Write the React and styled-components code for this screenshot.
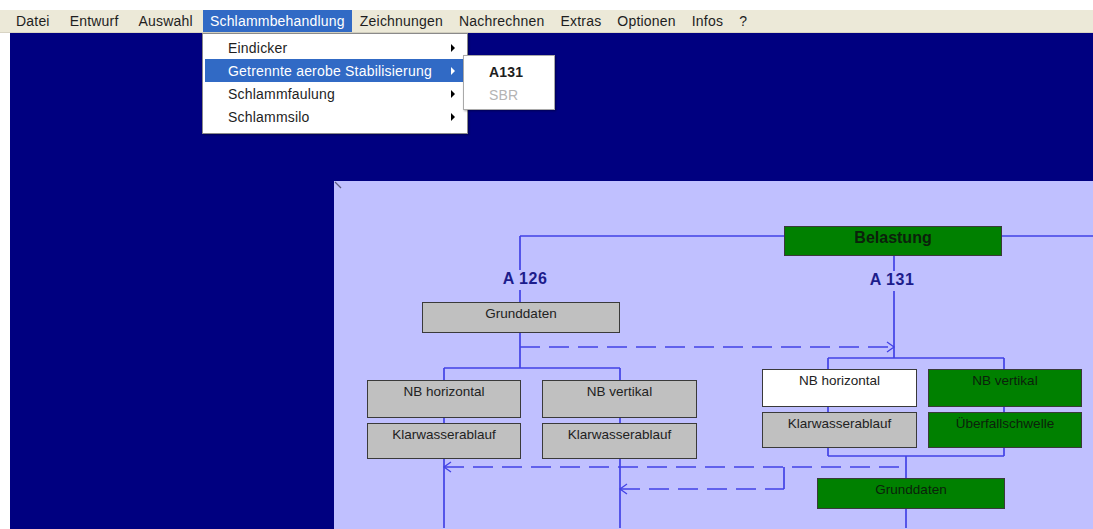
import React from "react";
import styled, { createGlobalStyle } from "styled-components";

const GlobalStyle = createGlobalStyle`
    html, body {
        margin: 0;
        padding: 0;
        background: #ffffff;
        overflow: hidden;
    }
    * {
        box-sizing: border-box;
    }
`;

const Screen = styled.div`
    position: relative;
    display: flex;
    flex-direction: column;
    width: 1093px;
    height: 529px;
    padding-top: 10px;
    font-family: "Liberation Sans", Arial, sans-serif;
    background: #ffffff;
`;

const MenuBar = styled.ul`
    display: flex;
    align-items: stretch;
    height: 23px;
    margin: 0;
    padding: 0 0 0 6px;
    list-style: none;
    background: #ece9d8;
    border-bottom: 1px solid #d8d4c4;
`;

const MenuItem = styled.li`
    display: flex;
    align-items: center;
    padding: 0 ${(p) => p.$pad}px;
    font-size: 14px;
    letter-spacing: 0.2px;
    color: ${(p) => (p.$active ? "#ffffff" : "#1e1e1e")};
    background: ${(p) => (p.$active ? "#316ac5" : "transparent")};
`;

const Workspace = styled.div`
    flex: 1;
    display: flex;
    margin-left: 10px;
    padding: 148px 0 0 324px;
    background: #000080;
`;

const Canvas = styled.div`
    position: relative;
    flex: 1;
    background: #c0c0ff;
    overflow: hidden;
`;

const Wires = styled.svg`
    position: absolute;
    left: 0;
    top: 0;
    width: 100%;
    height: 100%;
`;

const Node = styled.div`
    position: absolute;
    left: ${(p) => p.$x}px;
    top: ${(p) => p.$y}px;
    width: ${(p) => p.$w}px;
    height: ${(p) => p.$h}px;
    padding-top: 3px;
    border: 1.5px solid #3a3a3a;
    background: ${(p) =>
        p.$tone === "green" ? "#008000" : p.$tone === "white" ? "#ffffff" : "#c0c0c0"};
    color: ${(p) => (p.$tone === "green" ? "#0b220b" : "#222222")};
    font-size: ${(p) => (p.$bold ? 16 : 13.5)}px;
    font-weight: ${(p) => (p.$bold ? 700 : 400)};
    line-height: 16px;
    text-align: center;
    white-space: nowrap;
`;

const Label = styled.div`
    position: absolute;
    left: ${(p) => p.$x}px;
    top: ${(p) => p.$y}px;
    transform: translateX(-50%);
    font-size: 16px;
    font-weight: 700;
    letter-spacing: 0.5px;
    line-height: 20px;
    color: #1c1c8c;
    white-space: nowrap;
`;

const Dropdown = styled.div`
    position: absolute;
    left: 202px;
    top: 33px;
    width: 266px;
    padding: 2px 2px 5px;
    background: #ffffff;
    border: 1px solid #8a8a8a;
    box-shadow: 1px 1px 2px rgba(0, 0, 0, 0.35);
`;

const SubMenu = styled(Dropdown)`
    left: 463px;
    top: 55px;
    width: 92px;
    padding: 4px 2px 3px;
    border-color: #a9a9a9;
`;

const DropItem = styled.div`
    display: flex;
    align-items: center;
    justify-content: space-between;
    height: 23px;
    padding: 0 10px 0 23px;
    font-size: 14px;
    letter-spacing: 0.2px;
    font-weight: ${(p) => (p.$bold ? 700 : 400)};
    color: ${(p) => (p.$active ? "#ffffff" : p.$disabled ? "#b4b4b4" : "#1e1e1e")};
    background: ${(p) => (p.$active ? "#316ac5" : "transparent")};
`;

const Arrow = styled.span`
    width: 0;
    height: 0;
    border-top: 4px solid transparent;
    border-bottom: 4px solid transparent;
    border-left: 4px solid ${(p) => (p.$light ? "#ffffff" : "#000000")};
`;

const menu = [
    { label: "Datei", pad: 10 },
    { label: "Entwurf", pad: 10 },
    { label: "Auswahl", pad: 10 },
    { label: "Schlammbehandlung", pad: 7, active: true },
    { label: "Zeichnungen", pad: 8 },
    { label: "Nachrechnen", pad: 8 },
    { label: "Extras", pad: 8 },
    { label: "Optionen", pad: 8 },
    { label: "Infos", pad: 8 },
    { label: "?", pad: 8 },
];

const nodes = [
    { x: 450, y: 45, w: 218, h: 30, tone: "green", text: "Belastung", bold: true },
    { x: 88, y: 121, w: 198, h: 31, tone: "gray", text: "Grunddaten" },
    { x: 33, y: 199, w: 154, h: 38, tone: "gray", text: "NB horizontal" },
    { x: 33, y: 242, w: 154, h: 36, tone: "gray", text: "Klarwasserablauf" },
    { x: 208, y: 199, w: 155, h: 38, tone: "gray", text: "NB vertikal" },
    { x: 208, y: 242, w: 155, h: 36, tone: "gray", text: "Klarwasserablauf" },
    { x: 428, y: 188, w: 155, h: 38, tone: "white", text: "NB horizontal" },
    { x: 594, y: 188, w: 154, h: 38, tone: "green", text: "NB vertikal" },
    { x: 428, y: 231, w: 155, h: 36, tone: "gray", text: "Klarwasserablauf" },
    { x: 594, y: 231, w: 154, h: 36, tone: "green", text: "Überfallschwelle" },
    { x: 483, y: 297, w: 188, h: 31, tone: "green", text: "Grunddaten" },
];

// solid connectors, canvas coordinates
const solid = [
    "M186 55 H450",
    "M668 55 H759",
    "M186 55 V89",
    "M186 109 V121",
    "M186 152 V187",
    "M110 187 H286",
    "M110 187 V347",
    "M286 187 V347",
    "M560 75 V90",
    "M560 110 V177",
    "M494 177 H670",
    "M494 177 V275",
    "M670 177 V275",
    "M494 275 H670",
    "M572 275 V347",
    "M450 286 V308",
];

const dashed = ["M186 166 H560", "M110 286 H572", "M286 308 H450"];

const arrows = ["M553 161 L560 166 L553 171", "M117 281 L110 286 L117 291", "M293 303 L286 308 L293 313"];

const App = () => {
    return (
        <Screen>
            <GlobalStyle />
            <MenuBar>
                {menu.map((m) => (
                    <MenuItem key={m.label} $pad={m.pad} $active={m.active}>
                        {m.label}
                    </MenuItem>
                ))}
            </MenuBar>
            <Workspace>
                <Canvas>
                    <Wires>
                        <path d="M1 1 L7 7" stroke="#5a5a80" strokeWidth="1.2" />
                        {solid.map((d) => (
                            <path key={d} d={d} stroke="#4242e6" strokeWidth="1.7" fill="none" />
                        ))}
                        {dashed.map((d) => (
                            <path
                                key={d}
                                d={d}
                                stroke="#4242e6"
                                strokeWidth="1.7"
                                strokeDasharray="20 9"
                                fill="none"
                            />
                        ))}
                        {arrows.map((d) => (
                            <path key={d} d={d} stroke="#4242e6" strokeWidth="1.3" fill="none" />
                        ))}
                    </Wires>
                    <Label $x={191} $y={88}>A 126</Label>
                    <Label $x={558} $y={89}>A 131</Label>
                    {nodes.map((n, i) => (
                        <Node key={i} $x={n.x} $y={n.y} $w={n.w} $h={n.h} $tone={n.tone} $bold={n.bold}>
                            {n.text}
                        </Node>
                    ))}
                </Canvas>
            </Workspace>
            <Dropdown>
                <DropItem>
                    Eindicker <Arrow />
                </DropItem>
                <DropItem $active>
                    Getrennte aerobe Stabilisierung <Arrow $light />
                </DropItem>
                <DropItem>
                    Schlammfaulung <Arrow />
                </DropItem>
                <DropItem>
                    Schlammsilo <Arrow />
                </DropItem>
            </Dropdown>
            <SubMenu>
                <DropItem $bold>A131</DropItem>
                <DropItem $disabled>SBR</DropItem>
            </SubMenu>
        </Screen>
    );
};

export default App;
